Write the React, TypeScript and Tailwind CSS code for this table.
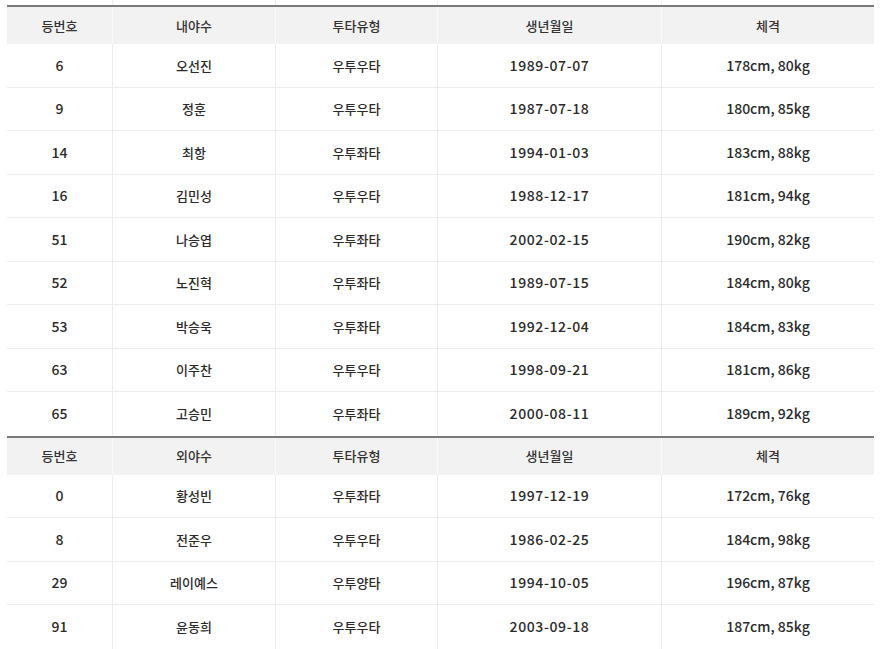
const COLS = "grid grid-cols-[106px_163px_162px_224px_212px]";

const infield = [
  ["6", "오선진", "우투우타", "1989-07-07", "178cm, 80kg"],
  ["9", "정훈", "우투우타", "1987-07-18", "180cm, 85kg"],
  ["14", "최항", "우투좌타", "1994-01-03", "183cm, 88kg"],
  ["16", "김민성", "우투우타", "1988-12-17", "181cm, 94kg"],
  ["51", "나승엽", "우투좌타", "2002-02-15", "190cm, 82kg"],
  ["52", "노진혁", "우투좌타", "1989-07-15", "184cm, 80kg"],
  ["53", "박승욱", "우투좌타", "1992-12-04", "184cm, 83kg"],
  ["63", "이주찬", "우투우타", "1998-09-21", "181cm, 86kg"],
  ["65", "고승민", "우투좌타", "2000-08-11", "189cm, 92kg"],
];

const outfield = [
  ["0", "황성빈", "우투좌타", "1997-12-19", "172cm, 76kg"],
  ["8", "전준우", "우투우타", "1986-02-25", "184cm, 98kg"],
  ["29", "레이예스", "우투양타", "1994-10-05", "196cm, 87kg"],
  ["91", "윤동희", "우투우타", "2003-09-18", "187cm, 85kg"],
];

function Section({ title, rows }: { title: string; rows: string[][] }) {
  const head = ["등번호", title, "투타유형", "생년월일", "체격"];
  return (
    <div className="border-t-2 border-[#7a7a7a]">
      <div className={`${COLS} h-[37px] bg-[#f2f2f2] text-[#333] text-[13px] font-medium`}>
        {head.map((h, i) => (
          <div
            key={i}
            className={`flex items-center justify-center ${i < 4 ? "border-r border-[#fafafa]" : ""}`}
          >
            {h}
          </div>
        ))}
      </div>
      {rows.map((r, ri) => (
        <div
          key={ri}
          className={`${COLS} h-[43.5px] text-[#2a2a2a] text-[14px] font-medium ${ri < rows.length - 1 ? "border-b border-[#ececec]" : ""}`}
        >
          {r.map((c, i) => (
            <div
              key={i}
              className={`flex items-center justify-center ${i < 4 ? "border-r border-[#ececec]" : ""} ${i === 3 ? "tracking-[0.6px]" : ""} ${i === 1 || i === 2 ? "text-[13px]" : ""}`}
            >
              {c}
            </div>
          ))}
        </div>
      ))}
    </div>
  );
}

export default function App() {
  return (
    <div
      className="w-[881px] h-[649px] bg-white overflow-hidden pl-[7px]"
      style={{ fontFamily: '"Noto Sans CJK KR", "Noto Sans", sans-serif' }}
    >
      <div className={`${COLS} h-[5px]`}>
        {[0, 1, 2, 3, 4].map((i) => (
          <div key={i} className={i < 4 ? "border-r border-[#ececec]" : ""} />
        ))}
      </div>
      <div className="w-[867px]">
        <Section title="내야수" rows={infield} />
        <Section title="외야수" rows={outfield} />
        <div className="border-t border-[#ececec]" />
      </div>
    </div>
  );
}
